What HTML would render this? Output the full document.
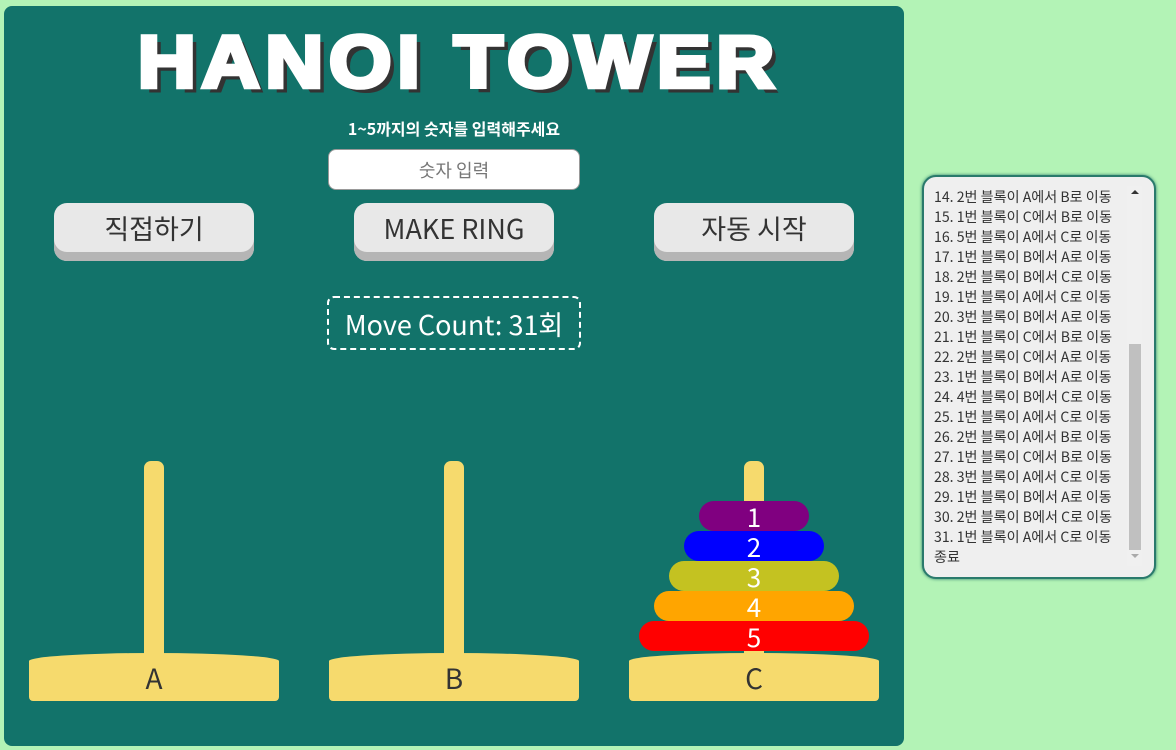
<!DOCTYPE html>
<html><head><meta charset="utf-8"><style>
*{box-sizing:border-box;margin:0;padding:0}
body{width:1176px;height:750px;background:#b3f3b6;font-family:"Noto Sans CJK KR",sans-serif;position:relative;overflow:hidden}
.panel{position:absolute;left:4px;top:6px;width:900px;height:740px;background:#12736a;border-radius:8px}
.title{position:absolute;left:0;top:10px;width:910px;text-align:center;font-family:"Liberation Sans",sans-serif;font-weight:900;font-size:80px;color:#fff;letter-spacing:6px;text-shadow:6px 6px 0 #333;-webkit-text-stroke:5px #fff;transform:scaleY(0.92)}
.sub{position:absolute;left:0;width:900px;top:110px;text-align:center;color:#fff;font-size:16px;font-weight:bold}
.inp{position:absolute;left:324px;top:143px;width:252px;height:41px;background:#fff;border:1px solid #999;border-radius:8px;text-align:center;line-height:40px;color:#777;font-size:18px}
.btn{position:absolute;top:197px;width:200px;height:58px;background:#e8e8e8;border-radius:13px;box-shadow:inset 0 -9px 0 #b5b5b5;text-align:center;line-height:50px;font-size:27px;color:#333}
.cnt{position:absolute;left:323px;top:290px;width:254px;height:54px;border:2px dashed #fff;border-radius:7px;color:#fff;font-size:27px;text-align:center;line-height:52px;white-space:nowrap}
.pole{position:absolute;width:20px;top:455px;height:200px;background:#f6da6d;border-radius:7px 7px 0 0}
.base{position:absolute;width:250px;top:647px;height:48px;background:#f6da6d;border-radius:50% 50% 4px 4px/8px 8px 4px 4px;text-align:center;font-size:28px;line-height:50px;color:#333}
.ring{position:absolute;height:30px;border-radius:15px;color:#fff;text-align:center;font-size:26px;line-height:32px}
.log{position:absolute;left:922px;top:175px;width:234px;height:404px;background:#efefef;border:2px solid #2a7a6c;border-radius:14px;box-shadow:0 0 3px #2a7a6c}
.lines{position:absolute;left:10px;top:10px;font-size:14.1px;line-height:20px;color:#333;white-space:nowrap}
.sb{position:absolute;left:1127px;top:186px;width:15px;height:380px;background:#f0f0f0}
.thumb{position:absolute;left:1129px;top:344px;width:12px;height:206px;background:#c0c0c0}
</style></head><body>
<div class="panel">
<div class="title">HANOI TOWER</div>
<div class="sub">1~5까지의 숫자를 입력해주세요</div>
<div class="inp">숫자 입력</div>
<div class="btn" style="left:50px">직접하기</div>
<div class="btn" style="left:350px">MAKE RING</div>
<div class="btn" style="left:650px">자동 시작</div>
<div class="cnt">Move Count: 31회</div>
<div class="pole" style="left:140px"></div>
<div class="pole" style="left:440px"></div>
<div class="pole" style="left:740px"></div>
<div class="base" style="left:25px">A</div>
<div class="base" style="left:325px">B</div>
<div class="base" style="left:625px">C</div>
<div class="ring" style="left:695px;top:495px;width:110px;background:#800080">1</div>
<div class="ring" style="left:680px;top:525px;width:140px;background:#0000ff">2</div>
<div class="ring" style="left:665px;top:555px;width:170px;background:#c4c221">3</div>
<div class="ring" style="left:650px;top:585px;width:200px;background:#ffa500">4</div>
<div class="ring" style="left:635px;top:615px;width:230px;background:#ff0000">5</div>
</div>
<div class="log"><div class="lines">
14. 2번 블록이 A에서 B로 이동<br>15. 1번 블록이 C에서 B로 이동<br>16. 5번 블록이 A에서 C로 이동<br>17. 1번 블록이 B에서 A로 이동<br>18. 2번 블록이 B에서 C로 이동<br>19. 1번 블록이 A에서 C로 이동<br>20. 3번 블록이 B에서 A로 이동<br>21. 1번 블록이 C에서 B로 이동<br>22. 2번 블록이 C에서 A로 이동<br>23. 1번 블록이 B에서 A로 이동<br>24. 4번 블록이 B에서 C로 이동<br>25. 1번 블록이 A에서 C로 이동<br>26. 2번 블록이 A에서 B로 이동<br>27. 1번 블록이 C에서 B로 이동<br>28. 3번 블록이 A에서 C로 이동<br>29. 1번 블록이 B에서 A로 이동<br>30. 2번 블록이 B에서 C로 이동<br>31. 1번 블록이 A에서 C로 이동<br>종료
</div></div>
<div class="sb"></div><div class="thumb"></div>
<div style="position:absolute;left:1131px;top:190px;width:0;height:0;border:4px solid transparent;border-bottom-color:#333;border-top:0"></div>
<div style="position:absolute;left:1131px;top:554px;width:0;height:0;border:4px solid transparent;border-top-color:#aaa;border-bottom:0"></div>
</body></html>
